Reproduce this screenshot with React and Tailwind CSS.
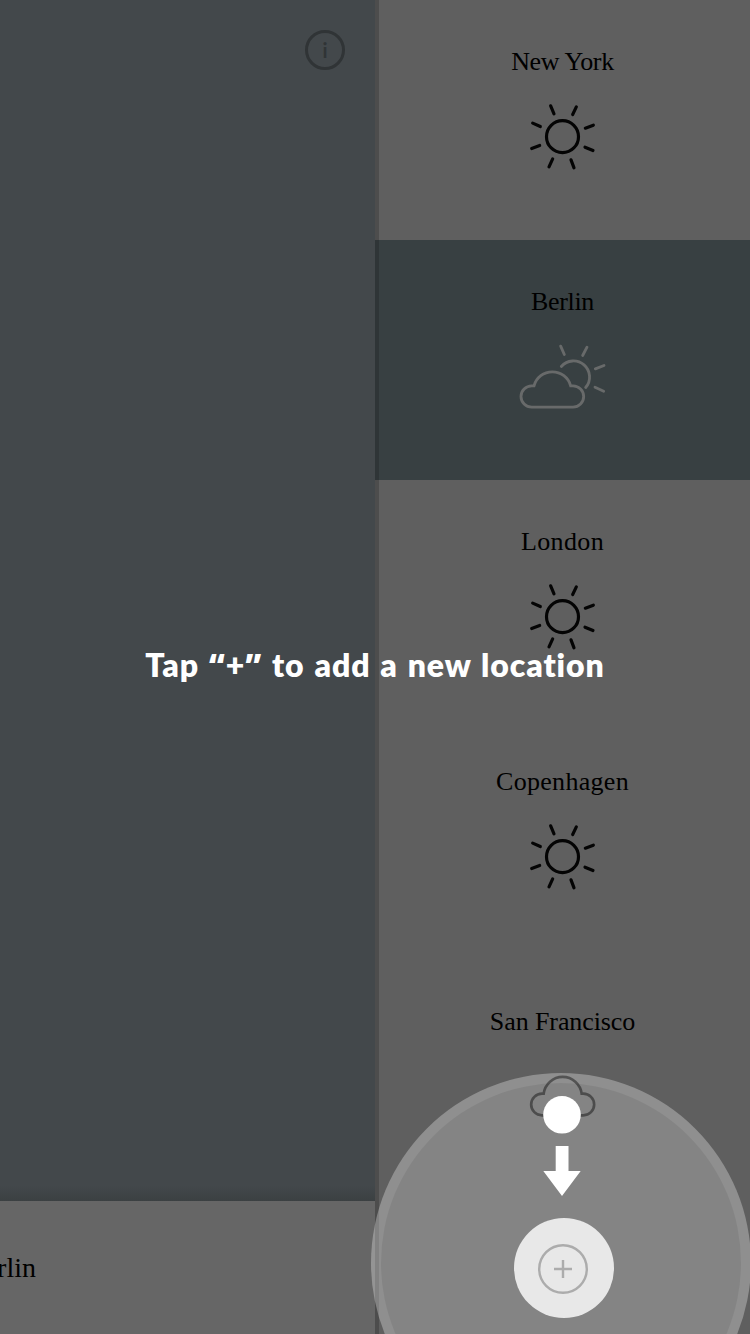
function SunIcon() {
  return (
    <svg className="h-[72px] w-[72px]" viewBox="111 213.5 216 216" fill="none" stroke="#040404" strokeWidth="9.5" strokeLinecap="round">
      <circle cx="217.5" cy="320.5" r="48" />
      <path d="M182 228L192 252M259 231L248 254M128 280L151 290M310 286L286 295M125 356L149 347M285 352L309 362M188 387L177 411M243 390L252 414" />
    </svg>
  );
}

function PartlyCloudyIcon() {
  return (
    <svg className="h-[72px] w-24" viewBox="75 213.5 288 216" fill="none" stroke="#686a6a" strokeWidth="8.5" strokeLinecap="round">
      <path d="M125 412A32 32 0 0 1 125 348H132A57 57 0 0 1 242 348H249A32 32 0 0 1 249 412Z" />
      <path d="M214 290A48 48 0 0 1 287 353" />
      <path d="M212 229L223 254M291 232L278 257M316 297L342 287M315 352L341 364" />
    </svg>
  );
}

function CloudIcon() {
  return (
    <svg className="h-[72px] w-[72px]" viewBox="111 215 216 216" fill="none" stroke="#0a0a0a" strokeWidth="8">
      <path d="M156 378A32.5 32.5 0 0 1 156 313H161A57.5 58 0 0 1 275 313H280A32.5 32.5 0 0 1 280 378Z" />
    </svg>
  );
}

const cities = [
  { name: "New York", Icon: SunIcon, row: "bg-[#5f5f5f] border-[#4d4d4d]", text: "tracking-[-0.35px]" },
  { name: "Berlin", Icon: PartlyCloudyIcon, row: "bg-[#384042] border-[#2f3537]", text: "tracking-[-0.35px]" },
  { name: "London", Icon: SunIcon, row: "bg-[#5f5f5f] border-[#4d4d4d]", text: "tracking-[0.35px]" },
  { name: "Copenhagen", Icon: SunIcon, row: "bg-[#5f5f5f] border-[#4d4d4d]", text: "tracking-[0.3px]" },
  { name: "San Francisco", Icon: CloudIcon, row: "bg-[#5f5f5f] border-[#4d4d4d]", text: "tracking-[-0.1px]" },
];

export default function App() {
  return (
    <div className="relative flex h-[1334px] w-[750px] overflow-hidden bg-[#5f5f5f]">
      <main className="flex w-[375px] flex-col bg-[#43484b]">
        <div className="flex flex-1 items-start justify-end pt-[30px] pr-[30px]">
          <button className="flex h-10 w-10 items-center justify-center rounded-full border-[3.5px] border-[#303436] font-[Lato,sans-serif] text-[20px] leading-none font-bold text-[#303436]">
            i
          </button>
        </div>
        <div className="h-[15px] bg-linear-to-b from-[#43484b] to-[#3b4042]" />
        <footer className="flex h-[133px] items-center bg-[#666666]">
          <div className="flex h-full w-9 items-center justify-end overflow-hidden font-['Liberation_Serif',serif] text-[28px] leading-none whitespace-nowrap text-black">
            Berlin
          </div>
        </footer>
      </main>

      <aside className="flex w-[375px] flex-col">
        {cities.map(({ name, Icon, row, text }) => (
          <section key={name} className={`flex h-60 flex-col items-center border-l-4 pr-1 pt-[47px] ${row}`}>
            <h2 className={`h-[54px] font-['Liberation_Serif',serif] text-[26px] leading-[30px] whitespace-nowrap text-black ${text}`}>{name}</h2>
            <Icon />
          </section>
        ))}
        <div className="flex-1 border-l-4 border-[#4d4d4d] bg-[#5f5f5f]" />
      </aside>

      <div className="absolute top-[645px] left-0 w-[750px] text-center font-[Lato,sans-serif] text-[32px] leading-10 font-extrabold tracking-[0.9px] [word-spacing:1.6px] whitespace-nowrap text-white">
        Tap <span className="font-['Open_Sans',sans-serif] leading-none">“</span>+<span className="font-['Open_Sans',sans-serif] leading-none">”</span> to add a new location
      </div>

      <div className="absolute top-[1073px] left-[371px] h-[380px] w-[380px] rounded-full bg-white/30" />
      <svg className="absolute top-[1073px] left-[371px] h-[261px] w-[379px]" viewBox="371 1073 379 261" fill="none">
        <circle cx="561" cy="1263" r="180" fill="#000" fillOpacity="0.075" />
        <circle cx="562" cy="1114.8" r="18.8" fill="#fff" />
        <path d="M555.7 1146H568.5V1171H580.7L562 1196L543.3 1171H555.7Z" fill="#fff" />
        <circle cx="564" cy="1268" r="50" fill="#e8e8e8" />
        <circle cx="563" cy="1269" r="23.8" stroke="#acacac" strokeWidth="2.4" />
        <path d="M554 1269H572M563 1260V1278" stroke="#acacac" strokeWidth="2.4" />
      </svg>
    </div>
  );
}
